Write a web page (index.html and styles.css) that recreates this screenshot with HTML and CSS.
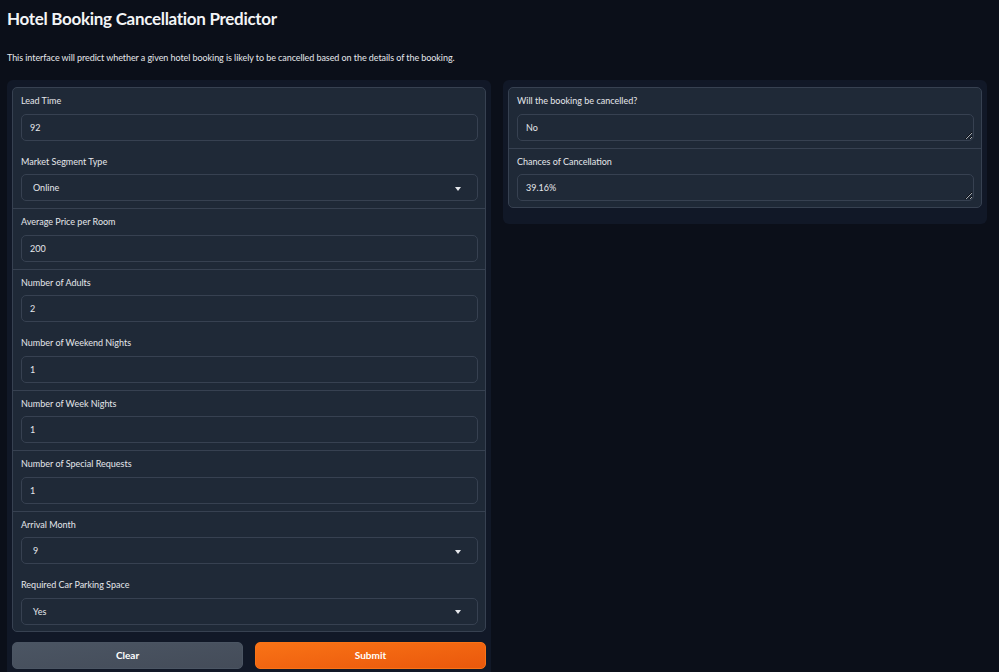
FILE: index.html
```html
<!DOCTYPE html>
<html lang="en">
<head>
<meta charset="utf-8">
<title>Hotel Booking Cancellation Predictor</title>
<link rel="stylesheet" href="styles.css">
</head>
<body>
<div class="app">
  <h1 class="title">Hotel Booking Cancellation Predictor</h1>
  <p class="desc">This interface will predict whether a given hotel booking is likely to be cancelled based on the details of the booking.</p>
  <div class="main">
    <div class="panel">
      <div class="group">
        <div class="block first"><div class="label">Lead Time</div><div class="input">92</div></div>
        <div class="block"><div class="label">Market Segment Type</div><div class="input select"><span>Online</span><span class="arrow"></span></div></div>
        <div class="block divided"><div class="label">Average Price per Room</div><div class="input">200</div></div>
        <div class="block divided"><div class="label">Number of Adults</div><div class="input">2</div></div>
        <div class="block"><div class="label">Number of Weekend Nights</div><div class="input">1</div></div>
        <div class="block divided"><div class="label">Number of Week Nights</div><div class="input">1</div></div>
        <div class="block divided"><div class="label">Number of Special Requests</div><div class="input">1</div></div>
        <div class="block divided"><div class="label">Arrival Month</div><div class="input select"><span>9</span><span class="arrow"></span></div></div>
        <div class="block last"><div class="label">Required Car Parking Space</div><div class="input select"><span>Yes</span><span class="arrow"></span></div></div>
      </div>
      <div class="buttons">
        <button class="btn secondary">Clear</button>
        <button class="btn primary">Submit</button>
      </div>
    </div>
    <div class="panel right">
      <div class="group">
        <div class="block first"><div class="label">Will the booking be cancelled?</div><textarea class="input area" readonly>No</textarea></div>
        <div class="block divided last"><div class="label">Chances of Cancellation</div><textarea class="input area" readonly>39.16%</textarea></div>
      </div>
    </div>
  </div>
</div>
</body>
</html>
```
FILE: styles.css
```css
html, body {
  margin: 0;
  padding: 0;
  background: #0b0f19;
  height: 100%;
  overflow: hidden;
}
body {
  font-family: "Lato", "Noto Sans", sans-serif;
  color: #e5e7eb;
}
.app {
  padding: 8px 12px 0 7px;
}
.title {
  margin: 0;
  font-size: 17px;
  line-height: 22px;
  font-weight: 700;
  letter-spacing: -0.3px;
  color: #f3f4f6;
}
.desc {
  margin: 22px 0 16px;
  font-size: 9px;
  line-height: 12px;
  letter-spacing: -0.07px;
  color: #e5e7eb;
}
.main {
  display: flex;
  gap: 12px;
  align-items: flex-start;
}
.panel {
  flex: 1 1 0;
  background: #111827;
  border-radius: 6px;
  padding: 7px 5px 16px;
}
.group {
  background: #1f2937;
  border: 1px solid #374151;
  border-radius: 5px;
  display: flex;
  flex-direction: column;
}
.block {
  padding: 6px 7px 7px 8px;
  border-top: 1px solid transparent;
}
.block.first {
  border-top: 0;
}
.block.divided {
  border-top-color: #374151;
}
.block.last {
  padding-bottom: 6px;
}
.label {
  font-size: 9px;
  line-height: 13px;
  height: 13px;
  margin-bottom: 6.5px;
  color: #e5e7eb;
}
.input {
  display: flex;
  align-items: center;
  box-sizing: border-box;
  height: 27px;
  border: 1px solid #374151;
  border-radius: 5px;
  background: #1f2937;
  padding: 0 8px;
  font-size: 9px;
  color: #e5e7eb;
}
.select {
  justify-content: space-between;
  padding: 0 16px 0 11px;
}
.arrow {
  width: 0;
  height: 0;
  border-left: 3.5px solid transparent;
  border-right: 3.5px solid transparent;
  border-top: 4px solid #e5e7eb;
  margin-top: 2px;
}
.area {
  display: block;
  width: 100%;
  font-family: inherit;
  line-height: 25px;
  resize: vertical;
  overflow: hidden;
  outline: none;
  color-scheme: dark;
}
.buttons {
  display: flex;
  gap: 12px;
  margin-top: 10px;
}
.btn {
  flex: 1 1 0;
  height: 27px;
  border-radius: 5px;
  font-family: inherit;
  font-size: 10px;
  font-weight: 700;
  color: #ffffff;
  cursor: pointer;
}
.secondary {
  background: linear-gradient(to bottom right, #4b5563, #444c59);
  border: 1px solid #4b5563;
}
.primary {
  background: linear-gradient(to bottom right, #f97316, #ea580c);
  border: 1px solid #f97316;
}
```
